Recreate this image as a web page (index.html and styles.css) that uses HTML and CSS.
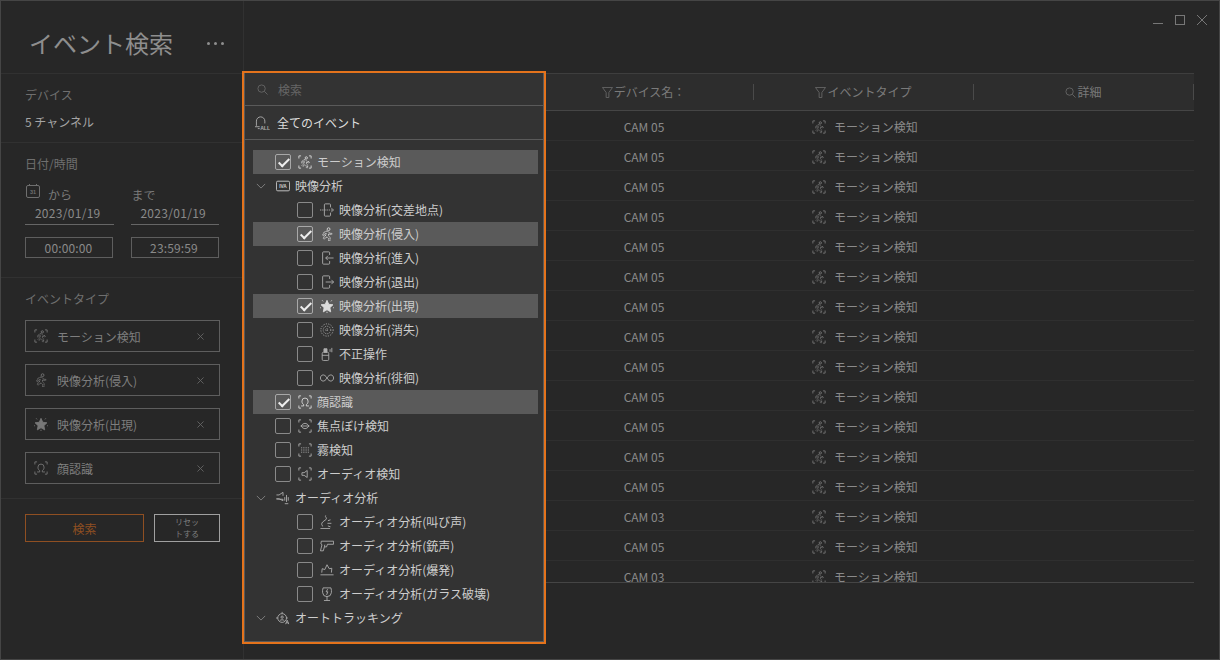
FILE: index.html
```html
<!DOCTYPE html>
<html lang="ja">
    <head>
        <meta charset="utf-8">
        <meta name="viewport" content="initial-scale=1, width=device-width">
        <title>イベント検索</title>
        <link rel="stylesheet" href="styles.css">
    </head>
    <body>
    <svg class="defs" width="0" height="0">
        <symbol id="i-motion" viewBox="0 0 16 16"><path d="M3.500 1H1v3M12.500 1H15v3M1 12v3h2.500M15 12v3h-2.500"/><circle cx="9.500" cy="3.300" r="1.300"/><path stroke-dasharray="1.300 .5" d="M8 5.200L5 6.500 4 9l1 .5L6.500 7.500h1L6.500 10l-2 2 1 1L8 11l1.500 1.500v2H11v-3L9.500 9.500l.5-1.500 1.500 1 1.500-.5-.5-1H11z"/></symbol>
        <symbol id="i-intrude" viewBox="0 0 16 16"><circle cx="9.800" cy="2.500" r="1.600"/><path stroke-dasharray="1.500 .4" d="M8 4.500L4.500 6 3 9.500l1.200.6L6 7.300h1.200L6 10.500l-2.500 2.200 1 1.200L8 11.300l1.800 1.700v2.500h1.700v-3.500L9.500 9.500l.6-2 1.600 1.200 2-.5-.4-1.200-1.400.2z"/></symbol>
        <symbol id="i-star" viewBox="0 0 16 16"><path class="solid" d="M8 1.500l2 4.500 4.800.6-3.500 3.300.9 4.800L8 12.300l-4.200 2.400.9-4.800L1.200 6.600 6 6z"/><path d="M2.500 1.500l1 1.200M13.500 1.500l-1 1.200M0 10h1M15 10h1M8 14.500V16"/></symbol>
        <symbol id="i-face" viewBox="0 0 16 16"><path d="M3.500 1H1v3M12.500 1H15v3M1 12v3h2.500M15 12v3h-2.500"/><path d="M3.500 12.500h3V11c-1.500-1-2-2.200-2-4a3.500 3.500 0 0 1 7 0c0 1.800-.5 3-2 4v1.500h3"/></symbol>
        <symbol id="i-blur" viewBox="0 0 16 16"><path d="M3.500 1H1v3M12.500 1H15v3M1 12v3h2.500M15 12v3h-2.500"/><path d="M3.500 8c2.500-4 6.500-4 9 0-2.500 4-6.500 4-9 0zM3 8h10"/></symbol>
        <symbol id="i-fog" viewBox="0 0 16 16"><path d="M3.500 1H1v3M12.500 1H15v3M1 12v3h2.500M15 12v3h-2.500"/><path stroke-dasharray="1 1" d="M3.500 5.500h9M3.500 8h9M3.500 10.500h9"/></symbol>
        <symbol id="i-audio" viewBox="0 0 16 16"><path d="M3.500 1H1v3M12.500 1H15v3M1 12v3h2.500M15 12v3h-2.500"/><path d="M4.500 6.500h2.500l3.500-2.500v8L7 9.500H4.500z"/></symbol>
        <symbol id="i-cross" viewBox="0 0 16 16"><path d="M6 1h5a1 1 0 0 1 1 1v3M12 11v3a1 1 0 0 1-1 1H6a1 1 0 0 1-1-1V2a1 1 0 0 1 1-1"/><path stroke-dasharray="1.500 1" d="M0 8h14"/><path d="M13 6l2.500 2-2.500 2"/></symbol>
        <symbol id="i-enter" viewBox="0 0 16 16"><path d="M11 4.500V2a1 1 0 0 0-1-1H4a1 1 0 0 0-1 1v12a1 1 0 0 0 1 1h6a1 1 0 0 0 1-1v-2.500M15.500 8H6.500M9 5.500L6.500 8 9 10.500"/></symbol>
        <symbol id="i-exit" viewBox="0 0 16 16"><path d="M11 4.500V2a1 1 0 0 0-1-1H4a1 1 0 0 0-1 1v12a1 1 0 0 0 1 1h6a1 1 0 0 0 1-1v-2.500M6.500 8h9M13 5.500L15.500 8 13 10.500"/></symbol>
        <symbol id="i-vanish" viewBox="0 0 16 16"><circle cx="8" cy="8" r="7" stroke-dasharray="1.300 1.500"/><circle cx="8" cy="8" r="4.300" stroke-dasharray="1.200 1.300"/><path stroke-dasharray="1 1" d="M8 6v4M6 8h4"/></symbol>
        <symbol id="i-tamper" viewBox="0 0 16 16"><rect x="2.500" y="6" width="7.500" height="9.500" rx="1.500"/><path d="M2.500 9.500H10"/><path class="solid" d="M4.500 2h3.500v4H4.500z"/><path d="M11.500 2.500v3M13.500 1v5"/></symbol>
        <symbol id="i-loop" viewBox="0 0 16 16"><path d="M8 8C6.500 5.300 4.800 4.500 3.700 4.500 1.800 4.500 .5 6 .5 8s1.300 3.500 3.200 3.500c1.100 0 2.800-.8 4.300-3.500 1.500-2.700 3.200-3.500 4.300-3.500 1.900 0 3.200 1.500 3.200 3.500s-1.300 3.500-3.200 3.500c-1.100 0-2.800-.8-4.300-3.500z"/></symbol>
        <symbol id="i-speaker" viewBox="0 0 16 16"><path d="M.5 4.500h3L8 1.500v4M8 9.500v1.500L3.500 9h-3zM12 4.500v8M10 7v4M14 7v4M10 14.500h4"/></symbol>
        <symbol id="i-scream" viewBox="0 0 16 16"><path d="M6.500 .5c-1.500 1.500 2 2.500 .5 4.500L3 8c-1.500 1.500-1.500 4 .5 5M.5 15.500h11M9 6.500l3-1M8.500 9.500h4.500M9 12.500l3 1"/></symbol>
        <symbol id="i-gun" viewBox="0 0 16 16"><path d="M1.500 2.500h14v3.500H8.500L7.500 9H5l-1.200 4.500H.5L2.300 6.500 1 5.500zM5.500 6.500L5 9"/></symbol>
        <symbol id="i-blast" viewBox="0 0 16 16"><path d="M2 11l.5-4.500 3 1L8 2l2.500 4.500 3-.5-.5 5M.5 13.500h15"/></symbol>
        <symbol id="i-glass" viewBox="0 0 16 16"><path d="M3.500 1h9c.6 2 .8 4 .5 5.500A5 5 0 0 1 8 11a5 5 0 0 1-5-4.500C2.700 5 2.900 3 3.500 1zM8 11v4.500M4.500 15.500h7M8.700 2.500L7 5.500h2L7.500 9"/></symbol>
        <symbol id="i-track" viewBox="0 0 16 16"><circle cx="7" cy="8" r="5"/><circle cx="7" cy="7" r="1.300"/><path d="M7 1v2M0 8h2M12 8h1.500M11 15l1.800-4.500 1.800 4.500M11.700 13.500h2.300M4.500 11c.8-1.300 4-1.300 5 0"/></symbol>
        <symbol id="i-filter" viewBox="0 0 12 12"><path d="M.5 .5h11L7.500 6v5.500h-3V6z"/></symbol>
        <symbol id="i-search" viewBox="0 0 12 12"><circle cx="5" cy="5" r="4"/><path d="M8 8l3.500 3.500"/></symbol>
        <symbol id="i-chevron" viewBox="0 0 12 12"><path d="M1 3.500l5 5 5-5"/></symbol>
        <symbol id="i-close" viewBox="0 0 8 8"><path d="M.5 .5l7 7M7.500 .5l-7 7"/></symbol>
    </svg>

    <div class="window">
        <div class="win-btns">
            <svg class="win-icon" viewBox="0 0 10 10"><path d="M0 8.500h10"/></svg>
            <svg class="win-icon" viewBox="0 0 10 10"><rect x=".5" y=".5" width="9" height="9"/></svg>
            <svg class="win-icon" viewBox="0 0 10 10"><path d="M0 0l10 10M10 0L0 10"/></svg>
        </div>

        <aside class="sidebar">
            <div class="title-row">
                <h1>イベント検索</h1>
                <div class="dots"><span></span><span></span><span></span></div>
            </div>
            <section class="block block-device">
                <div class="label">デバイス</div>
                <div class="value">5 チャンネル</div>
            </section>
            <section class="block block-date">
                <div class="label">日付/時間</div>
                <div class="date-cols">
                    <div class="date-col">
                        <div class="date-head">
                            <svg class="cal" viewBox="0 0 14 14"><rect x=".5" y="1.500" width="13" height="12" rx="1.500"/><path d="M3.500 0v2M10.500 0v2"/><text class="tiny" x="7" y="10">31</text></svg>
                            <span>から</span>
                        </div>
                        <div class="date-val">2023/01/19</div>
                        <div class="time-val">00:00:00</div>
                    </div>
                    <div class="date-col">
                        <div class="date-head date-head-to"><span>まで</span></div>
                        <div class="date-val">2023/01/19</div>
                        <div class="time-val">23:59:59</div>
                    </div>
                </div>
            </section>
            <section class="block block-types">
                <div class="label">イベントタイプ</div>
                <div class="chip"><svg class="ico"><use href="#i-motion"/></svg><span>モーション検知</span><svg class="chip-x"><use href="#i-close"/></svg></div>
                <div class="chip"><svg class="ico"><use href="#i-intrude"/></svg><span>映像分析(侵入)</span><svg class="chip-x"><use href="#i-close"/></svg></div>
                <div class="chip"><svg class="ico"><use href="#i-star"/></svg><span>映像分析(出現)</span><svg class="chip-x"><use href="#i-close"/></svg></div>
                <div class="chip"><svg class="ico"><use href="#i-face"/></svg><span>顔認識</span><svg class="chip-x"><use href="#i-close"/></svg></div>
            </section>
            <div class="actions">
                <button class="btn-search" type="button">検索</button>
                <button class="btn-reset" type="button">リセットする</button>
            </div>
        </aside>

        <main class="main">
            <div class="table">
                <div class="thead">
                    <div class="th-blank"></div>
                    <div class="th"><svg class="th-ico"><use href="#i-filter"/></svg>デバイス名：</div>
                    <div class="th"><svg class="th-ico"><use href="#i-filter"/></svg>イベントタイプ</div>
                    <div class="th"><svg class="th-ico"><use href="#i-search"/></svg>詳細</div>
                </div>
                <div class="tr"><div class="td-blank"></div><div class="td">CAM 05</div><div class="td td-type"><svg class="ico"><use href="#i-motion"/></svg>モーション検知</div><div class="td"></div></div>
                <div class="tr"><div class="td-blank"></div><div class="td">CAM 05</div><div class="td td-type"><svg class="ico"><use href="#i-motion"/></svg>モーション検知</div><div class="td"></div></div>
                <div class="tr"><div class="td-blank"></div><div class="td">CAM 05</div><div class="td td-type"><svg class="ico"><use href="#i-motion"/></svg>モーション検知</div><div class="td"></div></div>
                <div class="tr"><div class="td-blank"></div><div class="td">CAM 05</div><div class="td td-type"><svg class="ico"><use href="#i-motion"/></svg>モーション検知</div><div class="td"></div></div>
                <div class="tr"><div class="td-blank"></div><div class="td">CAM 05</div><div class="td td-type"><svg class="ico"><use href="#i-motion"/></svg>モーション検知</div><div class="td"></div></div>
                <div class="tr"><div class="td-blank"></div><div class="td">CAM 05</div><div class="td td-type"><svg class="ico"><use href="#i-motion"/></svg>モーション検知</div><div class="td"></div></div>
                <div class="tr"><div class="td-blank"></div><div class="td">CAM 05</div><div class="td td-type"><svg class="ico"><use href="#i-motion"/></svg>モーション検知</div><div class="td"></div></div>
                <div class="tr"><div class="td-blank"></div><div class="td">CAM 05</div><div class="td td-type"><svg class="ico"><use href="#i-motion"/></svg>モーション検知</div><div class="td"></div></div>
                <div class="tr"><div class="td-blank"></div><div class="td">CAM 05</div><div class="td td-type"><svg class="ico"><use href="#i-motion"/></svg>モーション検知</div><div class="td"></div></div>
                <div class="tr"><div class="td-blank"></div><div class="td">CAM 05</div><div class="td td-type"><svg class="ico"><use href="#i-motion"/></svg>モーション検知</div><div class="td"></div></div>
                <div class="tr"><div class="td-blank"></div><div class="td">CAM 05</div><div class="td td-type"><svg class="ico"><use href="#i-motion"/></svg>モーション検知</div><div class="td"></div></div>
                <div class="tr"><div class="td-blank"></div><div class="td">CAM 05</div><div class="td td-type"><svg class="ico"><use href="#i-motion"/></svg>モーション検知</div><div class="td"></div></div>
                <div class="tr"><div class="td-blank"></div><div class="td">CAM 05</div><div class="td td-type"><svg class="ico"><use href="#i-motion"/></svg>モーション検知</div><div class="td"></div></div>
                <div class="tr"><div class="td-blank"></div><div class="td">CAM 03</div><div class="td td-type"><svg class="ico"><use href="#i-motion"/></svg>モーション検知</div><div class="td"></div></div>
                <div class="tr"><div class="td-blank"></div><div class="td">CAM 05</div><div class="td td-type"><svg class="ico"><use href="#i-motion"/></svg>モーション検知</div><div class="td"></div></div>
                <div class="tr"><div class="td-blank"></div><div class="td">CAM 03</div><div class="td td-type"><svg class="ico"><use href="#i-motion"/></svg>モーション検知</div><div class="td"></div></div>
            </div>
        </main>

        <div class="picker">
            <div class="picker-inner">
                <div class="picker-search"><svg class="search-ico"><use href="#i-search"/></svg><span>検索</span></div>
                <div class="picker-all">
                    <svg class="ico" viewBox="0 0 16 16"><path d="M1.500 11.500V6.500a4.500 4.500 0 0 1 9 0V9M0 12.500h5M3 14.500h2"/><text class="tiny" x="10.800" y="15.500">ALL</text></svg>
                    <span>全てのイベント</span>
                </div>
                <ul class="tree">
                    <li class="row lv1 on"><span class="box"></span><svg class="ico"><use href="#i-motion"/></svg>モーション検知</li>
                    <li class="row group">
                        <svg class="chev"><use href="#i-chevron"/></svg>
                        <svg class="ico ico-iva" viewBox="0 0 16 12"><rect x=".5" y=".5" width="15" height="11" rx="1.500"/><text class="tiny" x="8" y="8.200">IVA</text></svg>
                        映像分析
                    </li>
                    <li class="row lv2"><span class="box"></span><svg class="ico"><use href="#i-cross"/></svg>映像分析(交差地点)</li>
                    <li class="row lv2 on"><span class="box"></span><svg class="ico"><use href="#i-intrude"/></svg>映像分析(侵入)</li>
                    <li class="row lv2"><span class="box"></span><svg class="ico"><use href="#i-enter"/></svg>映像分析(進入)</li>
                    <li class="row lv2"><span class="box"></span><svg class="ico"><use href="#i-exit"/></svg>映像分析(退出)</li>
                    <li class="row lv2 on"><span class="box"></span><svg class="ico"><use href="#i-star"/></svg>映像分析(出現)</li>
                    <li class="row lv2"><span class="box"></span><svg class="ico"><use href="#i-vanish"/></svg>映像分析(消失)</li>
                    <li class="row lv2"><span class="box"></span><svg class="ico"><use href="#i-tamper"/></svg>不正操作</li>
                    <li class="row lv2"><span class="box"></span><svg class="ico"><use href="#i-loop"/></svg>映像分析(徘徊)</li>
                    <li class="row lv1 on"><span class="box"></span><svg class="ico"><use href="#i-face"/></svg>顔認識</li>
                    <li class="row lv1"><span class="box"></span><svg class="ico"><use href="#i-blur"/></svg>焦点ぼけ検知</li>
                    <li class="row lv1"><span class="box"></span><svg class="ico"><use href="#i-fog"/></svg>霧検知</li>
                    <li class="row lv1"><span class="box"></span><svg class="ico"><use href="#i-audio"/></svg>オーディオ検知</li>
                    <li class="row group"><svg class="chev"><use href="#i-chevron"/></svg><svg class="ico"><use href="#i-speaker"/></svg>オーディオ分析</li>
                    <li class="row lv2"><span class="box"></span><svg class="ico"><use href="#i-scream"/></svg>オーディオ分析(叫び声)</li>
                    <li class="row lv2"><span class="box"></span><svg class="ico"><use href="#i-gun"/></svg>オーディオ分析(銃声)</li>
                    <li class="row lv2"><span class="box"></span><svg class="ico"><use href="#i-blast"/></svg>オーディオ分析(爆発)</li>
                    <li class="row lv2"><span class="box"></span><svg class="ico"><use href="#i-glass"/></svg>オーディオ分析(ガラス破壊)</li>
                    <li class="row group"><svg class="chev"><use href="#i-chevron"/></svg><svg class="ico"><use href="#i-track"/></svg>オートトラッキング</li>
                </ul>
            </div>
        </div>
    </div>
    </body>
</html>
```

FILE: styles.css
```css
* {
    box-sizing: border-box;
}
body {
    margin: 0;
    background-color: #272727;
    font-family: "Noto Sans CJK JP", "Noto Sans", sans-serif;
    font-size: 12px;
    color: #8c8c8c;
}
svg {
    fill: none;
    stroke: currentColor;
    stroke-width: 1;
    flex: none;
}
.defs {
    position: absolute;
}
.solid {
    fill: currentColor;
}
.tiny {
    font-family: "Liberation Sans", sans-serif;
    font-size: 5.5px;
    font-weight: bold;
    text-anchor: middle;
    fill: currentColor;
    stroke: none;
}
.window {
    position: relative;
    display: flex;
    width: 1220px;
    height: 660px;
    border: 1px solid #454545;
    overflow: hidden;
}
.win-btns {
    position: absolute;
    top: 14px;
    right: 12px;
    display: flex;
    gap: 12px;
    color: #777;
}
.win-icon {
    width: 10px;
    height: 10px;
}

/* left column */
.sidebar {
    width: 243px;
    flex: none;
    display: flex;
    flex-direction: column;
    border-right: 1px solid #313131;
}
.title-row {
    height: 72px;
    display: flex;
    align-items: center;
    justify-content: space-between;
    padding: 12px 19px 0 28px;
}
h1 {
    margin: 0;
    font-size: 24px;
    font-weight: 400;
    line-height: 32px;
    color: #8e8e8e;
}
.dots {
    display: flex;
    gap: 4px;
}
.dots span {
    width: 3px;
    height: 3px;
    border-radius: 50%;
    background-color: #8e8e8e;
}
.block {
    border-top: 1px solid #313131;
    padding: 0 24px;
}
.label {
    color: #6f6f6f;
    line-height: 18px;
}
.value {
    color: #a4a4a4;
    line-height: 18px;
    margin-top: 9px;
}
.block-device {
    height: 69px;
    padding-top: 12px;
}
.block-date {
    height: 135px;
    padding-top: 12px;
}
.date-cols {
    display: flex;
    gap: 17px;
    margin-top: 11px;
}
.date-col {
    width: 89px;
}
.date-head {
    height: 20px;
    display: flex;
    align-items: flex-end;
    gap: 8px;
    color: #7a7a7a;
    line-height: 18px;
}
.date-head-to {
    padding-left: 1px;
}
.cal {
    width: 14px;
    height: 14px;
    margin: 0 0 6px 1px;
    color: #6f6f6f;
}
.date-val {
    height: 22px;
    line-height: 20px;
    margin-top: -1px;
    padding-right: 3px;
    letter-spacing: .3px;
    text-align: center;
    color: #8a8a8a;
    border-bottom: 1px solid #666;
}
.time-val {
    width: 88px;
    height: 21px;
    line-height: 19px;
    margin-top: 12px;
    padding-right: 1px;
    letter-spacing: .15px;
    text-align: center;
    color: #8a8a8a;
    border: 1px solid #5e5e5e;
}
.block-types {
    height: 221px;
    padding-top: 12px;
}
.chip {
    height: 32px;
    width: 195px;
    margin-top: 12px;
    display: flex;
    align-items: center;
    gap: 9px;
    padding-left: 8px;
    color: #7e7e7e;
    border: 1px solid #5e5e5e;
}
.ico {
    width: 14px;
    height: 14px;
}
.chip .ico {
    color: #777;
}
.chip-x {
    width: 7px;
    height: 7px;
    margin-left: auto;
    margin-right: 15px;
    color: #666;
}
.actions {
    border-top: 1px solid #313131;
    display: flex;
    gap: 10px;
    padding: 15px 0 0 24px;
}
button {
    font-family: inherit;
    background-color: transparent;
    padding: 0;
    height: 28px;
    cursor: pointer;
}
.btn-search {
    width: 119px;
    font-size: 12px;
    color: #8f4f22;
    border: 1px solid #8f4f22;
}
.btn-reset {
    width: 66px;
    font-size: 8px;
    line-height: 12px;
    padding: 0 17px;
    color: #7e7e7e;
    border: 1px solid #a0a0a0;
}

/* results table */
.main {
    flex: 1;
    padding: 72px 25px 0 0;
}
.table {
    height: 510px;
    overflow: hidden;
    border-bottom: 1px solid #454545;
}
.thead {
    height: 38px;
    display: flex;
    align-items: center;
    background-color: #2d2d2d;
    border-top: 1px solid #3e3e3e;
    border-bottom: 1px solid #454545;
    color: #7a7a7a;
}
.th-blank, .td-blank {
    flex: 1;
}
.th {
    width: 220px;
    height: 16px;
    display: flex;
    align-items: center;
    justify-content: center;
    line-height: 16px;
    border-right: 1px solid #4a4a4a;
}
.th-ico {
    width: 11px;
    height: 11px;
    color: #666;
    margin-right: 1px;
}
.tr {
    height: 30px;
    display: flex;
    align-items: center;
    padding-top: 2px;
    border-bottom: 1px solid #2f2f2f;
    color: #8a8a8a;
}
.td {
    width: 220px;
    display: flex;
    align-items: center;
    justify-content: center;
    gap: 8px;
    line-height: 18px;
}
.td-type {
    padding-left: 2px;
}
.tr .ico {
    color: #777;
}

/* event type dropdown, sits over the list */
.picker {
    position: absolute;
    left: 241px;
    top: 70px;
    width: 304px;
    height: 573px;
    border: 2px solid #e4731c;
    background-color: #333;
}
.picker-inner {
    height: 100%;
    border-right: 1px solid #5a5a5a;
    border-left: 1px solid #5a5a5a;
    border-bottom: 1px solid #5a5a5a;
}
.picker-search {
    height: 33px;
    display: flex;
    align-items: center;
    gap: 10px;
    padding-left: 12px;
    color: #666;
    border-bottom: 1px solid #5a5a5a;
}
.search-ico {
    width: 11px;
    height: 11px;
}
.picker-all {
    height: 34px;
    display: flex;
    align-items: center;
    gap: 7px;
    padding-left: 10px;
    color: #ddd;
    border-bottom: 1px solid #5a5a5a;
}
.picker-all .ico {
    width: 15px;
    height: 15px;
    color: #aaa;
}
.tree {
    list-style: none;
    margin: 10px 5px 0 8px;
    padding: 0;
}
.row {
    height: 24px;
    display: flex;
    align-items: center;
    padding-bottom: 1px;
    color: #cdcdcd;
}
.row.on {
    background-color: #5a5a5a;
}
.row .ico {
    margin-top: 1px;
    margin-right: 5px;
    color: #b0b0b0;
}
.row.on .ico {
    color: #dcdcdc;
}
.row .ico-iva {
    color: #d0d0d0;
}
.lv1 {
    padding-left: 22px;
}
.lv2 {
    padding-left: 44px;
}
.box {
    position: relative;
    width: 16px;
    height: 16px;
    flex: none;
    margin-top: 1px;
    margin-right: 7px;
    border: 1px solid #8a8a8a;
    border-radius: 2px;
}
.on .box {
    border-color: #a8a8a8;
}
.on .box::after {
    content: "";
    position: absolute;
    left: 5px;
    top: 1px;
    width: 4px;
    height: 9px;
    border: solid #eee;
    border-width: 0 2px 2px 0;
    transform: rotate(45deg);
}
.group {
    padding-left: 3px;
}
.chev {
    width: 10px;
    height: 10px;
    margin-right: 10px;
    color: #8a8a8a;
}
```
